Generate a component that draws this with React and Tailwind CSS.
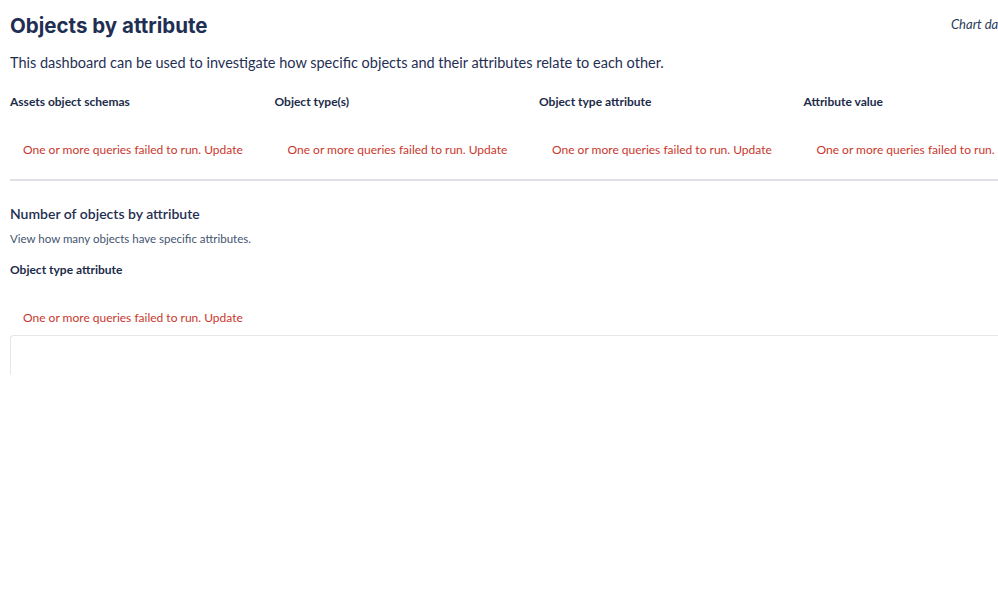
export default function App() {
  const cols = ["Assets object schemas", "Object type(s)", "Object type attribute", "Attribute value"];
  const err = "One or more queries failed to run. Update";
  return (
    <div className="w-[998px] h-[603px] overflow-hidden bg-white text-[#1c2b4a]" style={{ fontFamily: "Lato, 'Noto Sans', sans-serif" }}>
      <div className="w-[1070px] pl-[10px]">
        <div className="flex items-start justify-between pt-[12px]">
          <h1 className="text-[20.5px] leading-[28px] font-bold text-[#1f2f53]" style={{ fontFamily: "Inter, sans-serif" }}>Objects by attribute</h1>
          <div className="w-[119px] italic text-[13px] leading-[18px] pt-[3px] text-[#2c3a57] whitespace-nowrap">Chart data</div>
        </div>
        <p className="mt-[12px] text-[14.5px] leading-[22px] text-[#1f2f53]">This dashboard can be used to investigate how specific objects and their attributes relate to each other.</p>
        <div className="grid grid-cols-4 mt-[20px] w-[1058px]">
          {cols.map((c, i) => (
            <div key={c}>
              <div className="text-[12px] leading-[16px] font-bold">{c}</div>
              <div className="mt-[32px] pl-[13px] text-[12px] leading-[16px] text-[#c9372c] whitespace-nowrap">{i === 3 ? "One or more queries failed to run." : err}</div>
            </div>
          ))}
        </div>
        <div className="mt-[21px] h-[2px] bg-[#dfe1e6]" />
        <h2 className="mt-[23px] text-[14px] leading-[20px] font-semibold text-[#1f2f53]">Number of objects by attribute</h2>
        <p className="mt-[7px] text-[11.5px] leading-[16px] text-[#44546f]">View how many objects have specific attributes.</p>
        <div className="mt-[15px] text-[12px] leading-[16px] font-bold">Object type attribute</div>
        <div className="mt-[32px] pl-[13px] text-[12px] leading-[16px] text-[#c9372c]">{err}</div>
        <div className="mt-[9px] h-[40px] border-t border-l border-[#e4e6ea] rounded-tl-[4px]" />
      </div>
    </div>
  );
}
